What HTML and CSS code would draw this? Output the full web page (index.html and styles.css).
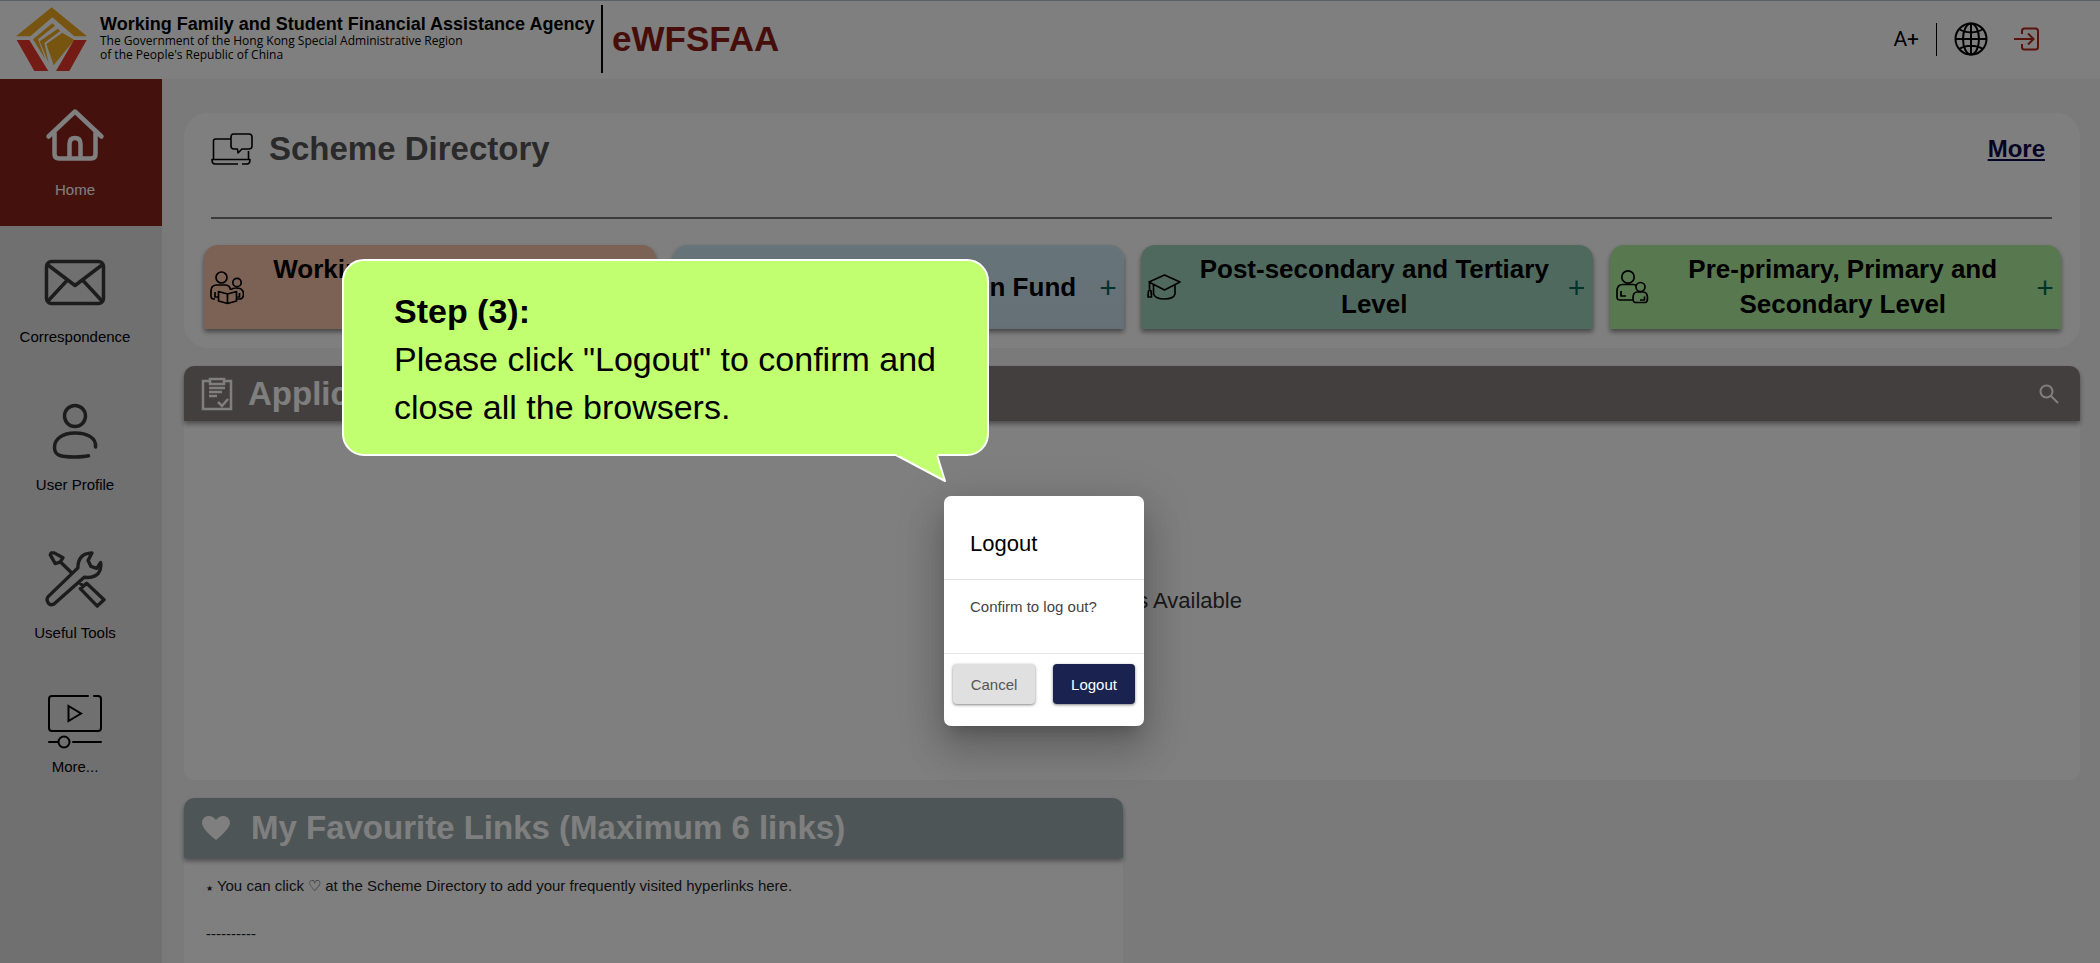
FILE: index.html
```html
<!DOCTYPE html>
<html lang="en">
<head>
<meta charset="utf-8">
<title>eWFSFAA</title>
<link rel="stylesheet" href="styles.css">
</head>
<body>
<header class="topbar">
  <svg class="logo" viewBox="0 0 270 234" aria-hidden="true">
    <path fill="#efab22" d="M140 22L246 109H208L142 52L76 109H33Z"/>
    <path fill="#efab22" d="M84 118L142 70 150 77 99 118 121 178ZM104 124L158 86 166 93 118 129 131 190ZM124 132L172 98 208 120 146 196Z"/>
    <path fill="#e9372a" d="M35 120H73L130 213H88ZM207 120H245L193 213H153Z"/>
  </svg>
  <div class="agency">
    <strong class="agency-name">Working Family and Student Financial Assistance Agency</strong>
    <span class="agency-sub">The Government of the Hong Kong Special Administrative Region</span>
    <span class="agency-sub">of the People's Republic of China</span>
  </div>
  <div class="brand">eWFSFAA</div>
  <div class="tools">
    <button class="font-size" type="button">A+</button>
    <span class="tools-line"></span>
    <button class="icon-btn" type="button" aria-label="Language">
      <svg width="34" height="34" viewBox="0 0 34 34" fill="none" stroke="#000" stroke-width="2">
        <circle cx="17" cy="17" r="15.500"/><ellipse cx="17" cy="17" rx="8" ry="15.500"/>
        <path d="M17 1.500v31M1.500 17h31M5 7c7 4.500 17 4.500 24 0M5 27c7-4.500 17-4.500 24 0"/>
      </svg>
    </button>
    <button class="icon-btn" type="button" aria-label="Logout">
      <svg width="25" height="24" viewBox="0 0 25 24" fill="none" stroke="#b3261a" stroke-width="2">
        <path d="M8 7V4q0-2.500 2.500-2.500h11Q24 1.500 24 4v16q0 2.500-2.500 2.500h-11Q8 22.500 8 20v-3M0 12h19M14 6.500l5.500 5.500-5.500 5.500"/>
      </svg>
    </button>
  </div>
</header>
<div class="layout">
  <nav class="sidebar">
    <a class="nav-item active" href="#">
      <svg width="60" height="60" viewBox="0 0 60 60" fill="none" stroke="currentColor" stroke-width="4.500" stroke-linecap="round" stroke-linejoin="round">
        <path d="M3.500 30.500L30 5.500l26.500 25M9.500 27v21q0 4.500 4.500 4.500h32q4.500 0 4.500-4.500V27M24.500 52V38q0-6 5.500-6t5.500 6v14"/>
      </svg>
      <span>Home</span>
    </a>
    <a class="nav-item" href="#">
      <svg width="62" height="60" viewBox="0 0 62 60" fill="none" stroke="#383838" stroke-width="3.500" stroke-linejoin="round">
        <rect x="2.500" y="8.500" width="57" height="42" rx="5"/><path d="M4 12l27 20.500L58 12M4 48l19-20.500M58 48L39 27.500"/>
      </svg>
      <span>Correspondence</span>
    </a>
    <a class="nav-item" href="#">
      <svg width="60" height="60" viewBox="0 0 60 60" fill="none" stroke="#383838" stroke-width="3.500" stroke-linecap="round">
        <circle cx="30" cy="15" r="10.500"/><path d="M50.500 46c1-9-8-14-20.500-14S9 38 9.500 47c.3 7 5 9 20 9 6 0 10-.3 14-1.200"/>
      </svg>
      <span>User Profile</span>
    </a>
    <a class="nav-item" href="#">
      <svg width="62" height="60" viewBox="0 0 64 62" fill="none" stroke="#383838" stroke-width="3.500" stroke-linejoin="round">
        <path d="M3.500 54q-1-3 1-5L35 19.500q0-15 14.500-15.500l-4 8 3 6 6 2 4-6q2 14-13 15.500l-4-.3L10 57Q5 59 3.500 54ZM7.500 4l-1 2 5 9 5-1.500 3-4.500-9-5zM16.500 13l13 12.500M36.500 34.500l5 5M37.500 41l6.500-5.500 18 17L55 59Z"/>
      </svg>
      <span>Useful Tools</span>
    </a>
    <a class="nav-item nav-more" href="#">
      <svg width="60" height="60" viewBox="0 0 60 60" fill="none" stroke="#000" stroke-width="2" stroke-linecap="round">
        <path d="M43 4H7Q4 4 4 7v29q0 3 3 3h46q3 0 3-3V7q0-3-3-3h-4M23.500 14v15L36 21.500ZM4 50h9M28 50h28"/><circle cx="19" cy="50" r="5.500"/>
      </svg>
      <span>More...</span>
    </a>
  </nav>
  <main class="main">
    <section class="directory">
      <div class="dir-head">
        <svg width="42" height="32" viewBox="0 0 42 32" fill="none" stroke="#000" stroke-width="1.600" stroke-linejoin="round">
          <path d="M20 6H4.500Q2.500 6 2.500 8v18M37.500 18v8M27 31H4Q1 31 1 26.500H39Q39 31 36 31H31M22.500 1h15.500q3 0 3 3v9q0 3-3 3h-7l-4 4-.5-4h-3.500q-3 0-3-3V4q0-3 2.500-3Z"/>
        </svg>
        <h1 class="title">Scheme Directory</h1>
        <a class="more" href="#">More</a>
      </div>
      <div class="tiles">
        <button class="tile peach" type="button">
          <svg width="34" height="36" viewBox="0 0 34 36" fill="none" stroke="#000" stroke-width="1.700" stroke-linejoin="round">
            <circle cx="11.500" cy="8.500" r="5.500"/><circle cx="27" cy="13.500" r="4.200"/>
            <path d="M5 30H3.500Q1 30 1 27v-5q0-6 6-6h8q5 0 5.500 5M5 23v5h3M21 20.500q2-1.500 5-1.500 7.500 0 7.500 6 0 5-4 5h-2M29.500 24v4h-2M8.500 22.500l9 2.500 9-2.500v9.500l-9 2.500-9-2.500ZM17.500 25v9.500"/>
          </svg>
          <span class="tile-text">Working Family Allowance Scheme</span><span class="plus">+</span>
        </button>
        <button class="tile blue" type="button">
          <svg width="34" height="36" viewBox="0 0 34 36" fill="none" stroke="#000" stroke-width="1.700"><circle cx="17" cy="10" r="6"/><path d="M5 32V24q0-6 6-6h12q6 0 6 6v8Z"/></svg>
          <span class="tile-text">Continuing Education Fund</span><span class="plus">+</span>
        </button>
        <button class="tile teal" type="button">
          <svg width="34" height="36" viewBox="0 0 34 36" fill="none" stroke="#000" stroke-width="1.700" stroke-linejoin="round">
            <path d="M17.500 6L33 13 17.500 21 2 13ZM6.500 16v9q2 5 11 5t10.500-5v-9M2.500 14v6M1 27l.5-5q1.500-2 2.500 0l.5 5v1H1Z"/>
          </svg>
          <span class="tile-text">Post-secondary and Tertiary Level</span><span class="plus">+</span>
        </button>
        <button class="tile green" type="button">
          <svg width="34" height="36" viewBox="0 0 34 36" fill="none" stroke="#000" stroke-width="1.700" stroke-linejoin="round">
            <circle cx="12" cy="8" r="6.200"/><circle cx="24.500" cy="18" r="4.500"/>
            <path d="M18 31H4q-3 0-3-3v-6q0-6.500 6-6.500h10q2.500 0 3.500 1.500M5 22v5h5M18 33q-1-1-1-4 0-6 4.500-6H27q4.500 0 4.500 6 0 4-2 4.500H19ZM28.500 27.500V31H24"/>
          </svg>
          <span class="tile-text">Pre-primary, Primary and Secondary Level</span><span class="plus">+</span>
        </button>
      </div>
    </section>
    <section class="panel">
      <div class="bar bar-dark">
        <svg width="32" height="34" viewBox="0 0 32 34" fill="none" stroke="#fff" stroke-width="2.500">
          <path d="M9 4H2v28h28V4h-7M9 2h14v5H9ZM8 11h16M8 15h13M8 19h8M17 25l4 4 6-7"/>
        </svg>
        <h2 class="title">Application Status</h2>
        <button class="search" type="button" aria-label="Search">
          <svg width="20" height="20" viewBox="0 0 20 20" fill="none" stroke="#fff" stroke-width="2"><circle cx="7.500" cy="7.500" r="6"/><path d="M12 12l7 7"/></svg>
        </button>
      </div>
      <div class="panel-body">No Records Available</div>
    </section>
    <section class="panel favourites">
      <div class="bar bar-slate">
        <svg width="30" height="26" viewBox="0 0 32 28" fill="#fff"><path d="M16 27Q1 15 1 8.500C1 1 11-2 16 5.500 21-2 31 1 31 8.500 31 15 16 27 16 27Z"/></svg>
        <h2 class="title">My Favourite Links (Maximum 6 links)</h2>
      </div>
      <div class="fav-body">
        <p><span class="star">★</span> You can click ♡ at the Scheme Directory to add your frequently visited hyperlinks here.</p>
        <p>----------</p>
      </div>
    </section>
  </main>
</div>
<div class="overlay"></div>
<div class="dialog" role="dialog" aria-labelledby="dlg-title">
  <h2 class="dialog-title" id="dlg-title">Logout</h2>
  <div class="dialog-body">Confirm to log out?</div>
  <div class="dialog-actions">
    <button class="btn btn-cancel" type="button">Cancel</button>
    <button class="btn btn-logout" type="button">Logout</button>
  </div>
</div>
<aside class="callout">
  <strong>Step (3):</strong><br>
  Please click "Logout" to confirm and close all the browsers.
  <svg class="tail" width="54" height="30" viewBox="0 0 54 30"><path fill="#c1ff71" stroke="#fff" stroke-width="2" stroke-linejoin="round" d="M1 1L50 27 42 1"/><path fill="#c1ff71" d="M1 0h42l-1 2H3Z"/></svg>
</aside>
</body>
</html>
```
FILE: styles.css
```css
* { box-sizing: border-box; }
body {
  margin: 0;
  height: 100vh;
  overflow: hidden;
  display: flex;
  flex-direction: column;
  position: relative;
  background: #f5f5f5;
  color: #000;
  font-family: "Liberation Sans", Arial, sans-serif;
  font-size: 15px;
}
h1, h2, p { margin: 0; }
button { font-family: inherit; border: 0; background: none; padding: 0; color: inherit; }
svg { flex: none; }

.topbar {
  flex: none;
  height: 79px;
  display: flex;
  align-items: center;
  padding: 0 61px 2px 5px;
  background: #fff;
  border-top: 1px solid #b4c0d2;
}
.logo { width: 90px; height: 78px; }
.agency {
  display: flex;
  flex-direction: column;
  justify-content: center;
  width: 508px;
  height: 68px;
  padding: 0 0 2px 5px;
  border-right: 2px solid #000;
  white-space: nowrap;
}
.agency-name { font-size: 18px; line-height: 20px; }
.agency-sub { font-family: "Open Sans", sans-serif; font-size: 12px; line-height: 14px; }
.brand { padding-left: 9px; font-size: 35px; font-weight: bold; color: #8c1c14; }
.tools { margin-left: auto; display: flex; align-items: center; }
.font-size { font-family: Roboto, sans-serif; font-size: 21px; }
.tools-line { width: 1px; height: 33px; margin: 0 17px; background: #000; }
.icon-btn { display: flex; margin-right: 26px; }
.icon-btn:last-child { margin-right: 0; }

.layout { flex: 1; min-height: 0; display: flex; }
.sidebar { flex: none; width: 162px; background: #e1e1e1; }
.nav-item {
  display: flex;
  flex-direction: column;
  align-items: center;
  gap: 13px;
  height: 148px;
  padding: 27px 12px 0 0;
  line-height: 22px;
  color: #000;
  text-decoration: none;
}
.nav-item.active { height: 147px; background: #88231a; color: #fff; }
.nav-item.nav-more { gap: 4px; padding-top: 22px; }

.main { flex: 1; min-width: 0; padding: 34px 20px 0 22px; display: flex; flex-direction: column; }
.directory { background: #fff; border-radius: 24px; padding: 14px 19px 19px 20px; }
.dir-head {
  display: flex;
  align-items: flex-start;
  gap: 16px;
  height: 92px;
  margin: 0 9px 26px 7px;
  padding-top: 6px;
  border-bottom: 2px solid #777;
}
.title { font-size: 33px; line-height: 38px; font-weight: bold; }
.dir-head .title { line-height: 32px; color: #555; }
.more { margin-left: auto; margin-right: 7px; font-size: 24px; line-height: 32px; font-weight: bold; color: #0b0b4c; }
.tiles { display: grid; grid-template-columns: repeat(4, 1fr); gap: 17px; }
.tile {
  display: flex;
  align-items: center;
  height: 84px;
  padding: 0 7px 0 6px;
  border-radius: 14px 14px 0 0;
  box-shadow: 0 3px 5px rgba(0, 0, 0, .45);
  font-size: 26px;
  line-height: 35px;
  font-weight: bold;
}
.tile-text { flex: 1; padding: 0 8px; }
.peach { background: #f8c2aa; }
.blue { background: linear-gradient(#cdeaf2, #cbdfee); }
.teal { background: #a1d3bf; }
.green { background: #b1f1a0; }
.plus { font-size: 30px; font-weight: normal; color: #006652; width: 18px; }

.panel { margin-top: 18px; background: #fff; border-radius: 10px; }
.bar {
  display: flex;
  align-items: center;
  height: 55px;
  padding: 0 21px 0 17px;
  border-radius: 10px 10px 0 0;
  box-shadow: 0 3px 5px rgba(0, 0, 0, .4);
  color: #fff;
}
.bar-dark { background: #877e7c; gap: 15px; }
.bar-slate { background: #9daaad; height: 60px; gap: 20px; }
.search { margin-left: auto; display: flex; }
.panel-body {
  height: 359px;
  display: flex;
  align-items: center;
  justify-content: center;
  padding-left: 10px;
  font-size: 22px;
  color: #333;
}
.favourites { width: calc(50% - 9px); flex: 1; min-height: 0; border-radius: 10px 10px 0 0; }
.fav-body { padding: 16px 22px 0; line-height: 23px; color: #222; }
.fav-body p + p { margin-top: 22px; }
.star { font-size: 8px; }

.overlay { position: absolute; inset: 0; background: rgba(0, 0, 0, .5); }
.dialog {
  position: absolute;
  left: calc(50% - 106px);
  top: 496px;
  width: 200px;
  height: 230px;
  background: #fff;
  border-radius: 7px;
  box-shadow: 0 11px 15px -7px rgba(0, 0, 0, .2), 0 24px 38px 3px rgba(0, 0, 0, .14), 0 9px 46px 8px rgba(0, 0, 0, .12);
}
.dialog-title { padding: 32px 26px 19px; font-size: 22px; line-height: 32px; font-weight: normal; }
.dialog-body {
  height: 75px;
  padding: 16px 26px;
  border: solid #e4e4e4;
  border-width: 1px 0;
  line-height: 22px;
  color: #444;
}
.dialog-actions { display: flex; justify-content: space-between; padding: 10px 9px; }
.btn { width: 82px; height: 40px; border-radius: 4px; font-size: 15px; box-shadow: 0 1px 3px rgba(0, 0, 0, .5); }
.btn-cancel { background: #e0e0e0; color: #555; }
.btn-logout { background: #1a234f; color: #fff; }

.callout {
  position: absolute;
  left: 342px;
  top: 259px;
  width: 647px;
  padding: 26px 40px 23px 50px;
  border: 2px solid #fff;
  border-radius: 22px;
  background: #c1ff71;
  font-size: 34px;
  line-height: 48px;
}
.tail { position: absolute; left: 551px; top: 100%; }
```
